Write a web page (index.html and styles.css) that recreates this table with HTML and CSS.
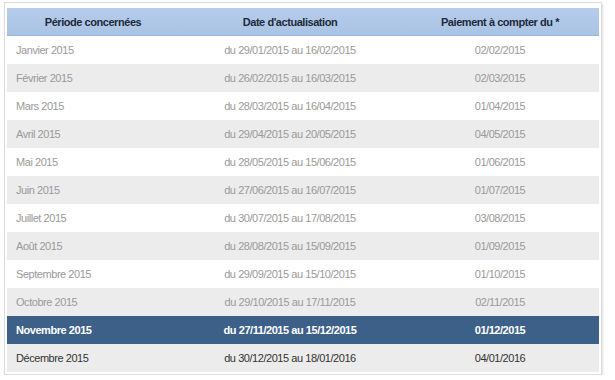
FILE: index.html
```html
<!DOCTYPE html>
<html lang="fr">
<head>
<meta charset="utf-8">
<link rel="stylesheet" href="styles.css">
</head>
<body>
<div class="box">
<table class="cal">
<thead>
<tr><th class="c1">Période concernées</th><th class="c2">Date d'actualisation</th><th class="c3">Paiement à compter du *</th></tr>
</thead>
<tbody>
<tr class="past"><td class="c1">Janvier 2015</td><td class="c2">du 29/01/2015 au 16/02/2015</td><td class="c3">02/02/2015</td></tr>
<tr class="past"><td class="c1">Février 2015</td><td class="c2">du 26/02/2015 au 16/03/2015</td><td class="c3">02/03/2015</td></tr>
<tr class="past"><td class="c1">Mars 2015</td><td class="c2">du 28/03/2015 au 16/04/2015</td><td class="c3">01/04/2015</td></tr>
<tr class="past"><td class="c1">Avril 2015</td><td class="c2">du 29/04/2015 au 20/05/2015</td><td class="c3">04/05/2015</td></tr>
<tr class="past"><td class="c1">Mai 2015</td><td class="c2">du 28/05/2015 au 15/06/2015</td><td class="c3">01/06/2015</td></tr>
<tr class="past"><td class="c1">Juin 2015</td><td class="c2">du 27/06/2015 au 16/07/2015</td><td class="c3">01/07/2015</td></tr>
<tr class="past"><td class="c1">Juillet 2015</td><td class="c2">du 30/07/2015 au 17/08/2015</td><td class="c3">03/08/2015</td></tr>
<tr class="past"><td class="c1">Août 2015</td><td class="c2">du 28/08/2015 au 15/09/2015</td><td class="c3">01/09/2015</td></tr>
<tr class="past"><td class="c1">Septembre 2015</td><td class="c2">du 29/09/2015 au 15/10/2015</td><td class="c3">01/10/2015</td></tr>
<tr class="past"><td class="c1">Octobre 2015</td><td class="c2">du 29/10/2015 au 17/11/2015</td><td class="c3">02/11/2015</td></tr>
<tr class="current"><td class="c1">Novembre 2015</td><td class="c2">du 27/11/2015 au 15/12/2015</td><td class="c3">01/12/2015</td></tr>
<tr class="future"><td class="c1">Décembre 2015</td><td class="c2">du 30/12/2015 au 18/01/2016</td><td class="c3">04/01/2016</td></tr>
</tbody>
</table>
</div>
</body>
</html>
```
FILE: styles.css
```css
html, body {
  margin: 0;
  padding: 0;
  background: #ffffff;
}
body {
  font-family: "Liberation Sans", Arial, sans-serif;
  font-size: 11px;
  letter-spacing: -0.45px;
}
.box {
  margin: 2px 0 0 4px;
  width: 592px;
  padding: 5px 2px 2px 2px;
  border: 1px solid #dcdcdc;
  box-shadow: 1px 1px 2px rgba(0, 0, 0, 0.12);
  background: #ffffff;
}
.cal {
  width: 592px;
  border-collapse: collapse;
  table-layout: fixed;
}
.cal th {
  height: 27px;
  padding: 0;
  font-weight: bold;
  color: #1e2a3a;
  background: linear-gradient(#b6cdea, #a9c3e4);
  border-bottom: 1px solid #9ab6dc;
  text-align: center;
}
.cal td {
  height: 28px;
  padding: 0;
  text-align: center;
}
.cal .c1 { width: 172px; }
.cal .c2 { width: 222px; }
.cal .c3 { width: 198px; }
.cal td.c1 { text-align: left; padding-left: 9px; }
.cal tbody tr:nth-child(odd) { background: #ffffff; }
.cal tbody tr:nth-child(even) { background: #ececec; }
.cal tr.past td { color: #9a9a9a; }
.cal tr.current { background: #3d6089 !important; }
.cal tr.current td { color: #ffffff; font-weight: bold; }
.cal tr.future td { color: #333333; }
```
